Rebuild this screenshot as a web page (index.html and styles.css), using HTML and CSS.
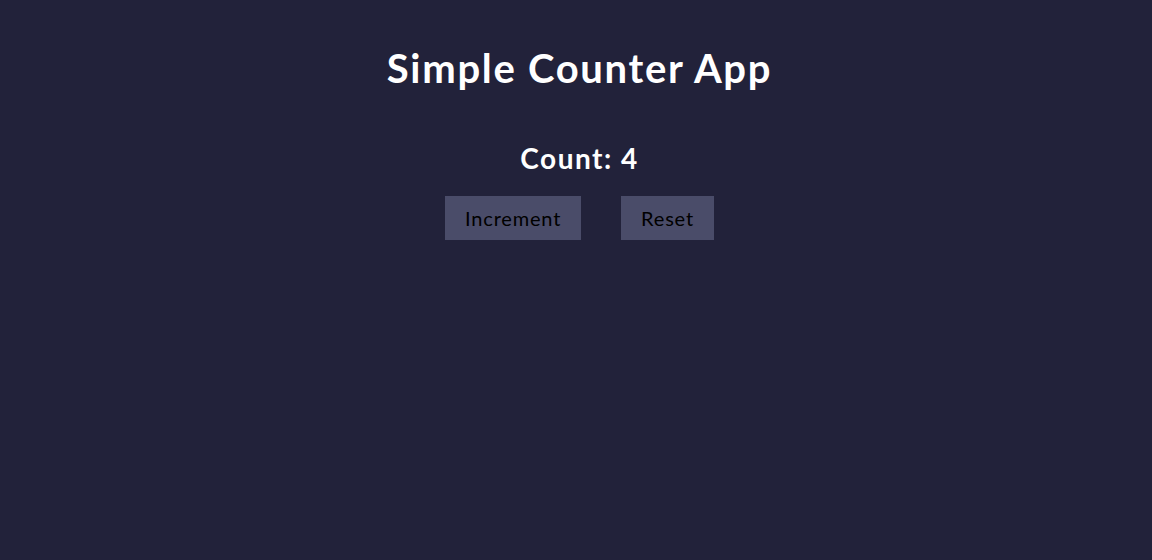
FILE: index.html
```html
<!DOCTYPE html>
<html>
<head>
<meta charset="utf-8">
<link rel="stylesheet" href="styles.css">
</head>
<body>
<div class="app">
  <h1 class="title">Simple Counter App</h1>
  <h2 class="count">Count: 4</h2>
  <div class="buttons">
    <button class="btn">Increment</button>
    <button class="btn">Reset</button>
  </div>
</div>
</body>
</html>
```
FILE: styles.css
```css
html, body {
  margin: 0;
  padding: 0;
  background: #22223a;
  height: 100%;
}
body {
  font-family: Lato, "Open Sans", sans-serif;
}
.app {
  display: flex;
  flex-direction: column;
  align-items: center;
  padding-left: 7px;
  padding-top: 44px;
}
.title {
  margin: 0;
  color: #ffffff;
  font-size: 40px;
  font-weight: 700;
  line-height: 48px;
  letter-spacing: 1.7px;
}
.count {
  margin: 49px 0 0;
  color: #ffffff;
  font-size: 28px;
  font-weight: 700;
  line-height: 34px;
  letter-spacing: 1.5px;
}
.buttons {
  display: flex;
  gap: 40px;
  margin-top: 21px;
}
.btn {
  background: #4a4c69;
  color: #000000;
  border: none;
  font-family: Lato, "Open Sans", sans-serif;
  font-size: 20px;
  height: 44px;
  padding: 0 20px;
  letter-spacing: 0.8px;
}
```
